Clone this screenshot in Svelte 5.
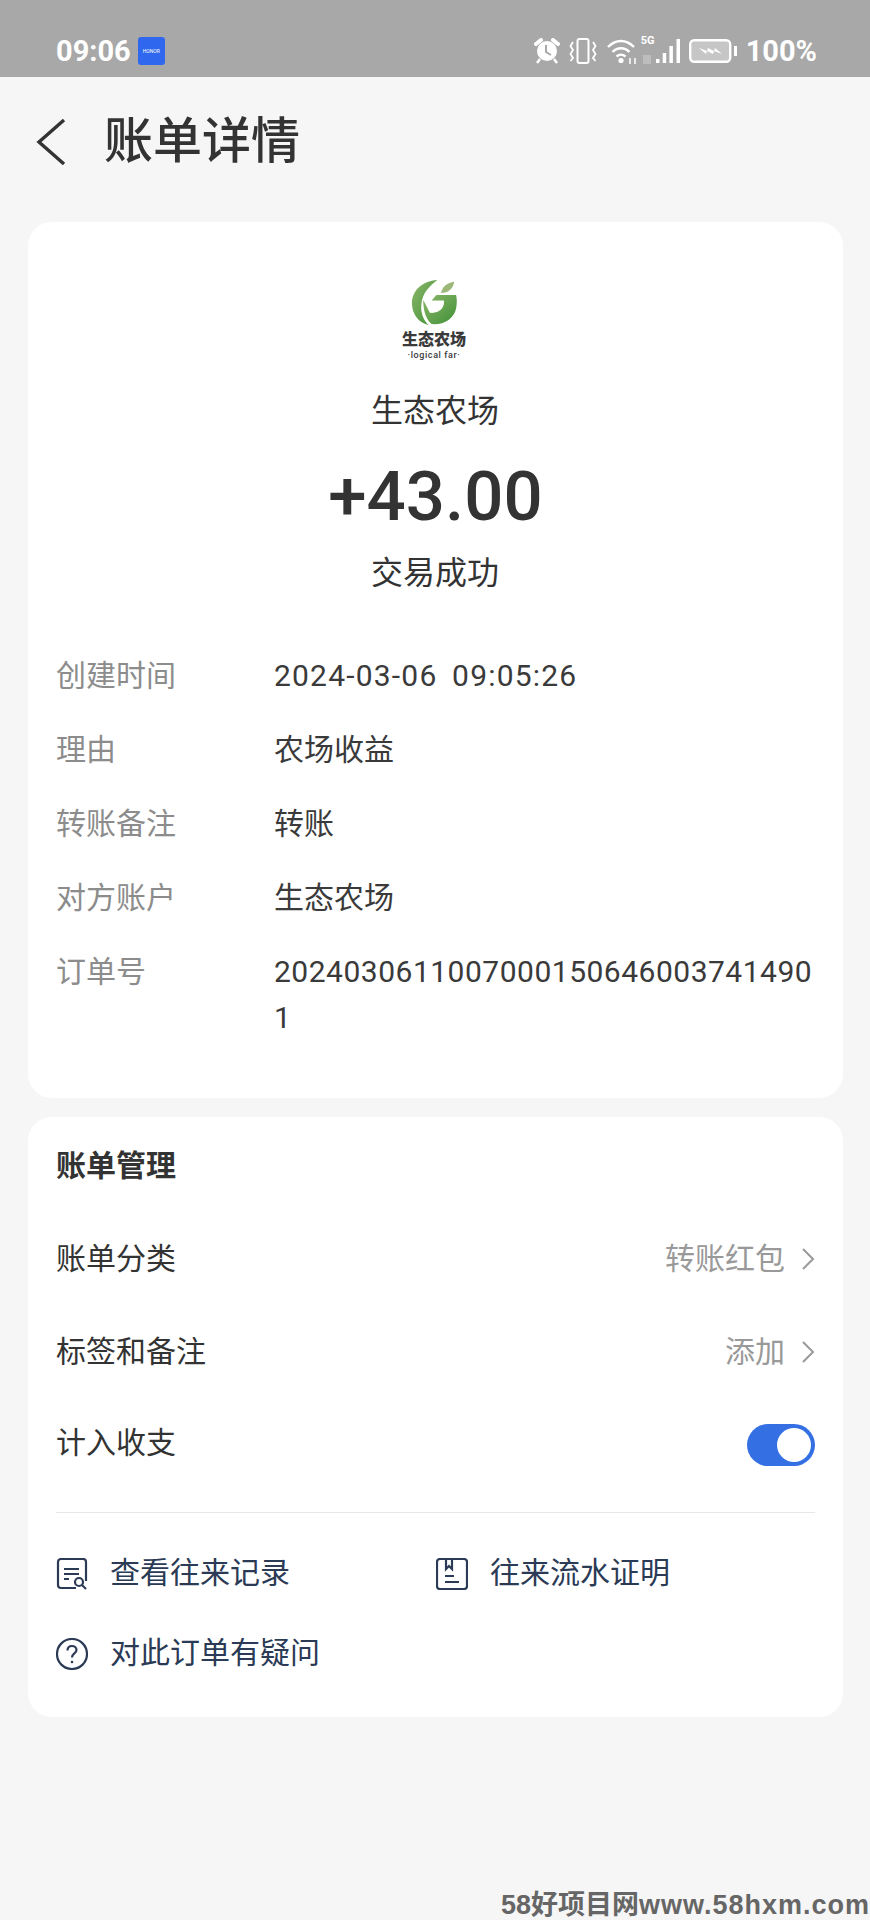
<script>
	const details = [
		{ label: '创建时间', value: '2024-03-06 09:05:26', kind: 'date' },
		{ label: '理由', value: '农场收益' },
		{ label: '转账备注', value: '转账' },
		{ label: '对方账户', value: '生态农场' },
		{ label: '订单号', value: '20240306110070001506460037414901', kind: 'order' }
	];
</script>

<div class="page">
	<div class="status">
		<div class="status-left">
			<span class="clock">09:06</span>
			<span class="honor">HONOR</span>
		</div>
		<div class="status-right">
			<svg width="26" height="26" viewBox="0 0 26 26">
				<circle cx="13" cy="13" r="10" fill="#fff" />
				<path d="M12 7v7l5 3" fill="none" stroke="#a8a8a8" stroke-width="2" />
				<path d="M2 6l5-4M24 6l-5-4" stroke="#fff" stroke-width="4" stroke-linecap="round" />
				<path d="M6 21l-3 4M20 21l3 4" stroke="#fff" stroke-width="2.500" />
			</svg>
			<svg width="28" height="26" viewBox="0 0 28 26" fill="none" stroke="#fff" stroke-width="2">
				<rect x="8.500" y="1" width="11" height="24" rx="2" />
				<path d="M4 4L1.500 8 4 12l-2.500 4L4 20l-2.500 3M24 4l2.500 4-2.500 4 2.500 4-2.500 4 2.500 3" stroke-width="1.800" />
			</svg>
			<svg class="wifi" width="30" height="26" viewBox="0 0 30 26" fill="none" stroke="#fff" stroke-width="2.400">
				<path d="M2 9c8-8 18-8 26 0M6.500 14c5-5 12-5 17 0M10.500 18.500c3-2.500 6-2.500 9 0" />
				<circle cx="15" cy="22.500" r="2.600" fill="#fff" stroke="none" />
				<path d="M24 20v6M29 26v-6" stroke-width="1.500" />
			</svg>
			<div class="signal">
				<span class="five-g">5G</span>
				<span class="sim"></span>
				<svg width="24" height="26" viewBox="0 0 24 26" fill="#fff">
					<rect x="0" y="21" width="3.500" height="4" />
					<rect x="6.700" y="15" width="3.500" height="10" />
					<rect x="13.400" y="8" width="3.500" height="17" />
					<rect x="20.500" y="1" width="3.500" height="24" />
				</svg>
			</div>
			<svg width="48" height="24" viewBox="0 0 48 24">
				<rect x="1.200" y="1.200" width="40" height="21.600" rx="4" fill="#c6c6c6" stroke="#fff" stroke-width="2.400" />
				<rect x="45" y="7" width="3" height="10" fill="#fff" />
				<path d="M10 9l8 3 1-3 6 3 1-3 7 6-8-3-1 3-6-3-1 3z" fill="#fff" />
			</svg>
			<span class="percent">100%</span>
		</div>
	</div>

	<header class="top">
		<svg class="back" width="30" height="46" viewBox="0 0 30 46" fill="none" stroke="#333" stroke-width="3.400">
			<path d="M28 1L3 23l25 22" />
		</svg>
		<h1>账单详情</h1>
	</header>

	<section class="card summary">
		<div class="logo">
			<svg width="47" height="47" viewBox="0 0 50 50">
				<defs>
					<linearGradient id="leaf" x1="0" y1="0" x2="1" y2="1">
						<stop offset="0" stop-color="#8cb86a" />
						<stop offset="1" stop-color="#3f8f36" />
					</linearGradient>
				</defs>
				<path d="M28 1C12 2 1 12 1 26c0 12 8 21 18 23-6-5-9-14-8-22C12 15 19 8 28 1z" fill="url(#leaf)" />
				<path d="M13 22c0 12 3 21 9 26 13 1 24-6 26-17 1-5 1-9 0-14H27l-5 6h13c1 7-4 14-15 13z" fill="url(#leaf)" />
				<path d="M32 15c1-7 7-11 14-12-1 7-6 12-14 12z" fill="#9cb878" />
			</svg>
			<span class="logo-cn">生态农场</span>
			<span class="logo-en">·logical far·</span>
		</div>
		<div class="merchant">生态农场</div>
		<div class="amount">+43.00</div>
		<div class="result">交易成功</div>

		<dl class="details">
			{#each details as row}
				<div class="row">
					<dt>{row.label}</dt>
					<dd class={row.kind}>{row.value}</dd>
				</div>
			{/each}
		</dl>
	</section>

	<section class="card manage">
		<h2>账单管理</h2>
		<div class="item">
			<span>账单分类</span>
			<span class="item-value">转账红包
				<svg width="14" height="24" viewBox="0 0 14 24" fill="none" stroke="#999" stroke-width="2"><path d="M2 2l10 10L2 22" /></svg>
			</span>
		</div>
		<div class="item">
			<span>标签和备注</span>
			<span class="item-value">添加
				<svg width="14" height="24" viewBox="0 0 14 24" fill="none" stroke="#999" stroke-width="2"><path d="M2 2l10 10L2 22" /></svg>
			</span>
		</div>
		<div class="item toggle-row">
			<span>计入收支</span>
			<span class="toggle"><span class="knob"></span></span>
		</div>
		<div class="divider"></div>
		<div class="links">
			<div class="link">
				<svg width="32" height="32" viewBox="0 0 32 32" fill="none" stroke="#2b3a55" stroke-width="2.200">
					<path d="M20 30H5a3 3 0 0 1-3-3V4a3 3 0 0 1 3-3h22a3 3 0 0 1 3 3v19" />
					<path d="M8 11h15M8 16h15M8 21h5" />
					<circle cx="23" cy="24" r="4" />
					<path d="M26 27l4 4" />
				</svg>
				<span>查看往来记录</span>
			</div>
			<div class="link">
				<svg width="32" height="32" viewBox="0 0 32 32" fill="none" stroke="#2b3a55" stroke-width="2.200">
					<rect x="1" y="1" width="30" height="30" rx="3" />
					<path d="M10 1v10l3-3 3 3V1M9 18h9M9 24h14" />
				</svg>
				<span>往来流水证明</span>
			</div>
			<div class="link">
				<svg width="32" height="32" viewBox="0 0 32 32" fill="none" stroke="#2b3a55" stroke-width="2.200">
					<circle cx="16" cy="16" r="15" />
					<path d="M11.500 12.500c0-3 2-4.500 4.500-4.500s4.500 1.700 4.500 4c0 3.500-4.500 3.500-4.500 7.500" />
					<circle cx="16" cy="24" r="1.300" fill="#2b3a55" stroke="none" />
				</svg>
				<span>对此订单有疑问</span>
			</div>
		</div>
	</section>

	<div class="watermark">58好项目网<span class="site">www.58hxm.com</span></div>
</div>

<style>
	:global(body) {
		margin: 0;
	}

	.page {
		position: relative;
		width: 870px;
		height: 1920px;
		overflow: hidden;
		background: #f6f6f6;
		font-family: Roboto, 'Noto Sans CJK SC', sans-serif;
		color: #333;
	}

	.status {
		height: 77px;
		padding: 0 53px 0 56px;
		display: flex;
		align-items: center;
		justify-content: space-between;
		background: #a8a8a8;
		color: #fff;
		font-weight: 700;
		box-sizing: border-box;
	}

	.status-left {
		display: flex;
		align-items: center;
		gap: 7px;
		padding-top: 24px;
	}

	.clock {
		font-size: 29px;
		line-height: 30px;
	}

	.honor {
		width: 27px;
		height: 28px;
		border-radius: 3px;
		background: #2f68ee;
		font-size: 5px;
		font-weight: 400;
		line-height: 28px;
		text-align: center;
	}

	.status-right {
		display: flex;
		align-items: center;
		gap: 9px;
		padding-top: 24px;
	}

	.signal {
		position: relative;
		width: 39px;
		height: 26px;
		margin-left: -4px;
		display: flex;
		justify-content: flex-end;
	}

	.five-g {
		position: absolute;
		left: 0;
		top: -4px;
		font-size: 11px;
		line-height: 14px;
	}

	.sim {
		position: absolute;
		left: 2px;
		bottom: 0;
		width: 8px;
		height: 9px;
		background: #bdbdbd;
	}

	.percent {
		font-size: 29px;
		line-height: 30px;
	}

	.top {
		height: 145px;
		padding: 0 0 16px 36px;
		display: flex;
		align-items: center;
		gap: 38px;
		box-sizing: border-box;
	}

	.back {
		flex: none;
	}

	h1 {
		margin: 0;
		font-size: 49px;
		font-weight: 500;
		line-height: 60px;
	}

	.card {
		margin: 0 27px 0 28px;
		background: #fff;
		border-radius: 24px;
		box-sizing: border-box;
	}

	.summary {
		height: 876px;
		padding-top: 57px;
		display: flex;
		flex-direction: column;
		align-items: center;
	}

	.logo {
		width: 100px;
		height: 85px;
		margin-right: 3px;
		display: flex;
		flex-direction: column;
		align-items: center;
		color: #3a3a3a;
	}

	.logo-cn {
		font-size: 16px;
		font-weight: 900;
		line-height: 18px;
		margin-top: 5px;
	}

	.logo-en {
		font-size: 9px;
		font-weight: 500;
		line-height: 12px;
		letter-spacing: 0.6px;
		white-space: nowrap;
	}

	.merchant,
	.result {
		font-size: 32px;
		line-height: 44px;
	}

	.merchant {
		margin-top: 25px;
		margin-right: 1px;
	}

	.amount {
		font-size: 69px;
		font-weight: 500;
		line-height: 80px;
		margin-top: 24px;
	}

	.result {
		margin-top: 14px;
		margin-right: 1px;
	}

	.details {
		align-self: stretch;
		margin: 58px 0 0;
		padding: 0 28px;
		display: flex;
		flex-direction: column;
		gap: 28px;
	}

	.row {
		display: flex;
		font-size: 30px;
		line-height: 46px;
	}

	dt {
		flex: none;
		width: 218px;
		color: #8c8c8c;
	}

	dd {
		margin: 0;
		width: 541px;
		word-break: break-all;
		color: #3a3a3a;
	}

	.date {
		letter-spacing: 1.2px;
		word-spacing: 6px;
	}

	.order {
		letter-spacing: 0.5px;
	}

	.manage {
		height: 600px;
		margin-top: 19px;
		padding: 26px 28px 0;
		font-size: 30px;
	}

	h2 {
		margin: 0;
		font-size: 30px;
		font-weight: 700;
		line-height: 46px;
	}

	.item {
		height: 46px;
		margin-top: 47px;
		display: flex;
		align-items: center;
		justify-content: space-between;
		line-height: 46px;
	}

	.toggle-row {
		margin-top: 45px;
	}

	.item-value {
		display: flex;
		align-items: center;
		gap: 16px;
		color: #999;
	}

	.toggle {
		width: 68px;
		height: 42px;
		margin-top: 4px;
		padding: 4px;
		display: flex;
		justify-content: flex-end;
		box-sizing: border-box;
		border-radius: 21px;
		background: #3470e4;
	}

	.knob {
		width: 34px;
		height: 34px;
		border-radius: 50%;
		background: #fff;
	}

	.divider {
		height: 1px;
		margin-top: 46px;
		background: #e8e8e8;
	}

	.links {
		margin-top: 34px;
		display: grid;
		grid-template-columns: 380px 1fr;
		row-gap: 34px;
	}

	.link {
		display: flex;
		align-items: center;
		gap: 22px;
		height: 46px;
		color: #2b3a55;
	}

	.link svg {
		margin-top: 7px;
		flex: none;
	}

	.watermark {
		position: absolute;
		right: 0;
		bottom: -2px;
		color: #666;
		font-family: 'Liberation Sans', 'Noto Sans CJK SC', sans-serif;
		font-size: 27px;
		font-weight: 700;
		line-height: 34px;
		white-space: nowrap;
	}

	.site {
		letter-spacing: 1px;
	}
</style>
